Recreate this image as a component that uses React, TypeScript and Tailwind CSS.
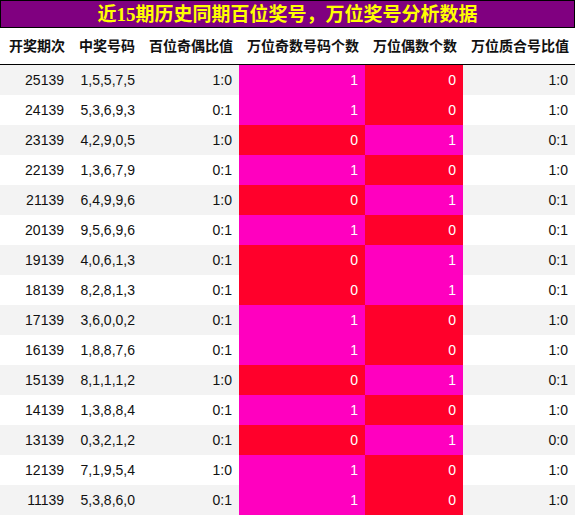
const rows: [string, string, string, number, number, string][] = [
  ["25139", "1,5,5,7,5", "1:0", 1, 0, "1:0"],
  ["24139", "5,3,6,9,3", "0:1", 1, 0, "1:0"],
  ["23139", "4,2,9,0,5", "1:0", 0, 1, "0:1"],
  ["22139", "1,3,6,7,9", "0:1", 1, 0, "1:0"],
  ["21139", "6,4,9,9,6", "1:0", 0, 1, "0:1"],
  ["20139", "9,5,6,9,6", "0:1", 1, 0, "0:1"],
  ["19139", "4,0,6,1,3", "0:1", 0, 1, "0:1"],
  ["18139", "8,2,8,1,3", "0:1", 0, 1, "0:1"],
  ["17139", "3,6,0,0,2", "0:1", 1, 0, "1:0"],
  ["16139", "1,8,8,7,6", "0:1", 1, 0, "1:0"],
  ["15139", "8,1,1,1,2", "1:0", 0, 1, "0:1"],
  ["14139", "1,3,8,8,4", "0:1", 1, 0, "1:0"],
  ["13139", "0,3,2,1,2", "0:1", 0, 1, "0:0"],
  ["12139", "7,1,9,5,4", "1:0", 1, 0, "1:0"],
  ["11139", "5,3,8,6,0", "0:1", 1, 0, "1:0"],
];

const headers = ["开奖期次", "中奖号码", "百位奇偶比值", "万位奇数号码个数", "万位偶数个数", "万位质合号比值"];
const widths = ["w-[71px]", "w-[70px]", "w-[98px]", "w-[126px]", "w-[98px]", "w-[112px]"];

function flag(v: number) {
  return v === 1 ? "bg-[#ff00bf]" : "bg-[#ff002b]";
}

export default function App() {
  return (
    <div className="w-[575px] bg-white font-['Liberation_Sans','Noto_Sans_CJK_SC',sans-serif] text-[14px] text-[#111]">
      <div className="h-[28px] border border-black bg-[#800080] flex items-center justify-center">
        <span className="font-['Liberation_Serif','Noto_Sans_CJK_SC',serif] font-bold text-[19px] text-[#ffff00] leading-none">
          近15期历史同期百位奖号，万位奖号分析数据
        </span>
      </div>
      <div className="flex h-[37px] border-b border-black font-bold text-[14px]">
        {headers.map((h, i) => (
          <div key={h} className={`${widths[i]} flex items-center justify-end pr-[6px]`}>
            {h}
          </div>
        ))}
      </div>
      {rows.map((r, idx) => {
        const bg = idx % 2 === 0 ? "bg-[#f3f3f3]" : "bg-white";
        return (
          <div key={r[0]} className={`flex h-[30px] ${bg}`}>
            <div className={`${widths[0]} flex items-center justify-end pr-[7px]`}>{r[0]}</div>
            <div className={`${widths[1]} flex items-center justify-end pr-[6px]`}>{r[1]}</div>
            <div className={`${widths[2]} flex items-center justify-end pr-[7px]`}>{r[2]}</div>
            <div className={`${widths[3]} ${flag(r[3])} flex items-center justify-end pr-[7px] text-white`}>{r[3]}</div>
            <div className={`${widths[4]} ${flag(r[4])} flex items-center justify-end pr-[7px] text-white`}>{r[4]}</div>
            <div className={`${widths[5]} flex items-center justify-end pr-[7px]`}>{r[5]}</div>
          </div>
        );
      })}
    </div>
  );
}
